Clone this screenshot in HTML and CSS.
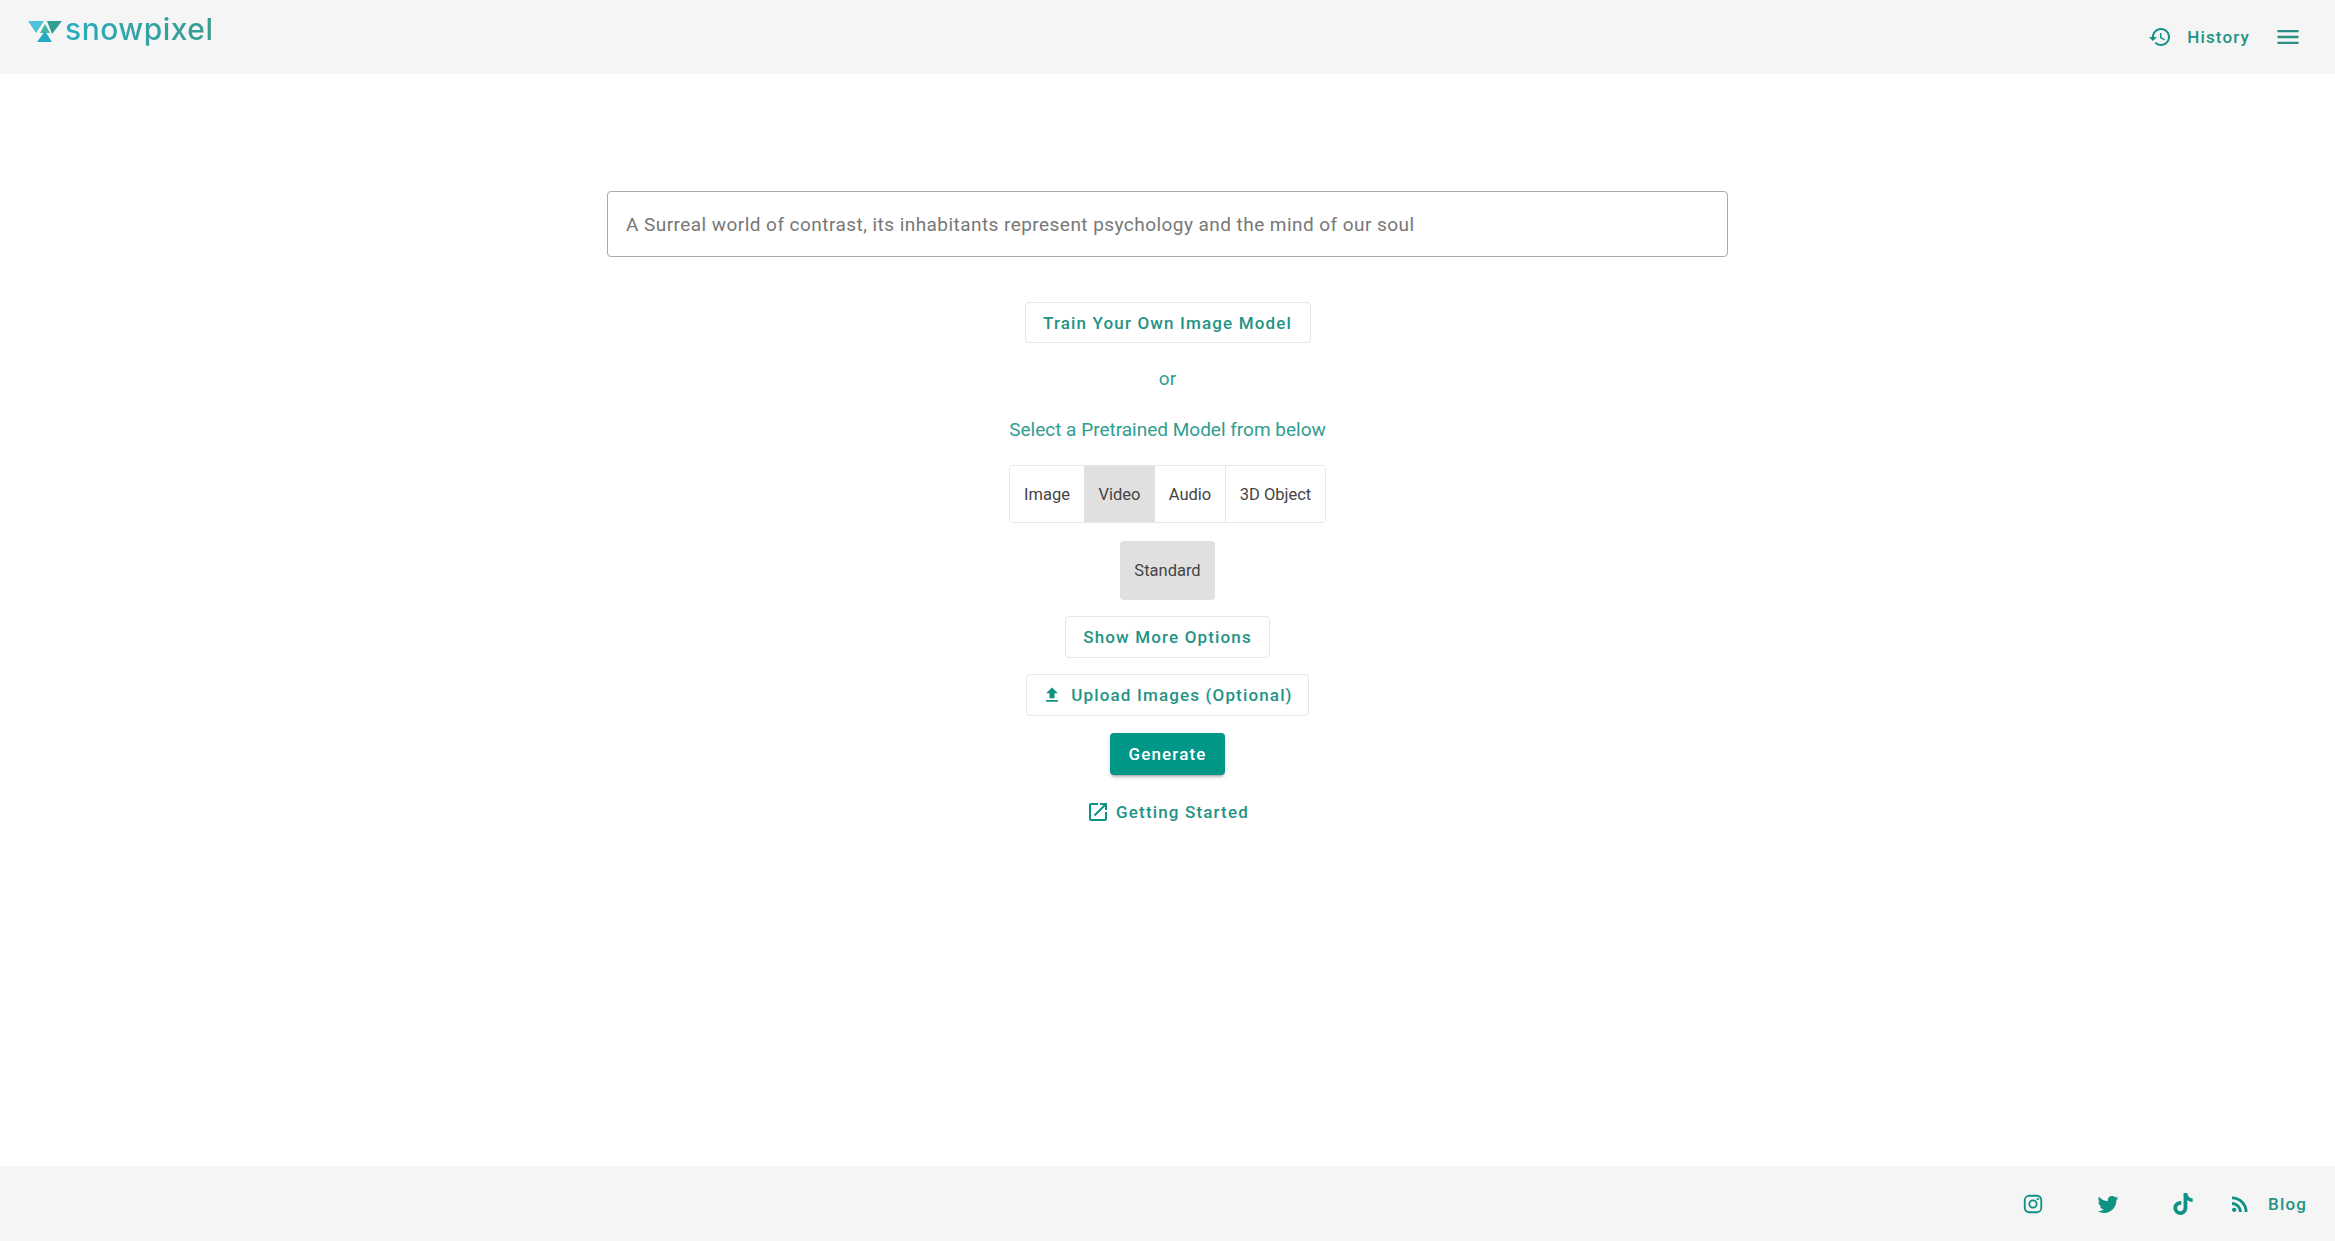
FILE: index.html
```html
<!DOCTYPE html>
<html lang="en">
<head>
    <meta charset="UTF-8">
    <meta name="viewport" content="width=device-width, initial-scale=1.0">
    <title>Snowpixel</title>
    <link rel="stylesheet" href="styles.css">
</head>
<body>
    <header class="topbar">
        <a class="logo" href="#">
            <svg class="logo-mark" viewBox="0 0 36 24">
                <polygon points="1,1 17,1 9,13" fill="#4fc4d6"/>
                <polygon points="20,1 35,1 25,14" fill="#2f9d8f"/>
                <polygon points="18,4 23,13 13,13" fill="#45b5a5"/>
                <polygon points="18,11 25,22 10,22" fill="#22acc4"/>
            </svg>
            <span class="logo-text">snowpixel</span>
        </a>
        <nav class="topnav">
            <a class="text-link history" href="#">
                <svg class="icon" viewBox="0 0 24 24"><path d="M13 3c-4.97 0-9 4.03-9 9H1l3.89 3.89.07.14L9 12H6c0-3.87 3.13-7 7-7s7 3.13 7 7-3.13 7-7 7c-1.93 0-3.68-.79-4.94-2.06l-1.42 1.42C8.27 19.99 10.51 21 13 21c4.97 0 9-4.03 9-9s-4.03-9-9-9zm-1 5v5l4.28 2.54.72-1.21-3.5-2.08V8H12z"/></svg>
                History
            </a>
            <button class="menu-btn"><svg class="icon menu-icon" viewBox="0 0 24 24"><path d="M3 18h18v-2H3v2zm0-5h18v-2H3v2zm0-7v2h18V6H3z"/></svg></button>
        </nav>
    </header>

    <main class="main">
        <input class="prompt" type="text" placeholder="A Surreal world of contrast, its inhabitants represent psychology and the mind of our soul">
        <button class="btn train">Train Your Own Image Model</button>
        <p class="hint or">or</p>
        <p class="hint select">Select a Pretrained Model from below</p>
        <div class="toggle-group">
            <button class="toggle t-image">Image</button>
            <button class="toggle t-video selected">Video</button>
            <button class="toggle t-audio">Audio</button>
            <button class="toggle t-object">3D Object</button>
        </div>
        <button class="toggle standard selected">Standard</button>
        <button class="btn more">Show More Options</button>
        <button class="btn upload">
            <svg class="icon upload-icon" viewBox="0 0 24 24"><path d="M9 16h6v-6h4l-7-7-7 7h4zm-4 2h14v2H5z"/></svg>
            Upload Images (Optional)
        </button>
        <button class="btn generate">Generate</button>
        <a class="text-link started" href="#">
            <svg class="icon" viewBox="0 0 24 24"><path d="M19 19H5V5h7V3H5c-1.11 0-2 .9-2 2v14c0 1.1.89 2 2 2h14c1.1 0 2-.9 2-2v-7h-2v7zM14 3v2h3.59l-9.83 9.83 1.41 1.41L19 6.41V10h2V3h-7z"/></svg>
            Getting Started
        </a>
    </main>

    <footer class="footer">
        <a class="social" href="#"><svg class="icon insta" viewBox="0 0 24 24"><path d="M7.8 2h8.4C19.4 2 22 4.6 22 7.8v8.4a5.8 5.8 0 0 1-5.8 5.8H7.8C4.6 22 2 19.4 2 16.2V7.8A5.8 5.8 0 0 1 7.8 2m-.2 2A3.6 3.6 0 0 0 4 7.6v8.8C4 18.39 5.61 20 7.6 20h8.8a3.6 3.6 0 0 0 3.6-3.6V7.6C20 5.61 18.39 4 16.4 4H7.6m9.65 1.5a1.25 1.25 0 0 1 1.25 1.25A1.25 1.25 0 0 1 17.25 8 1.25 1.25 0 0 1 16 6.75a1.25 1.25 0 0 1 1.25-1.25M12 7a5 5 0 0 1 5 5 5 5 0 0 1-5 5 5 5 0 0 1-5-5 5 5 0 0 1 5-5m0 2a3 3 0 0 0-3 3 3 3 0 0 0 3 3 3 3 0 0 0 3-3 3 3 0 0 0-3-3z"/></svg></a>
        <a class="social" href="#"><svg class="icon" viewBox="0 0 24 24"><path d="M22.46 6c-.77.35-1.6.58-2.46.69.88-.53 1.56-1.37 1.88-2.38-.83.5-1.75.85-2.72 1.05C18.37 4.5 17.26 4 16 4c-2.35 0-4.27 1.92-4.27 4.29 0 .34.04.67.11.98C8.28 9.09 5.11 7.38 3 4.79c-.37.63-.58 1.37-.58 2.15 0 1.49.75 2.81 1.91 3.56-.71 0-1.37-.2-1.95-.5v.03c0 2.08 1.48 3.82 3.44 4.21a4.22 4.22 0 0 1-1.93.07 4.28 4.28 0 0 0 4 2.98 8.521 8.521 0 0 1-5.33 1.84c-.34 0-.68-.02-1.02-.06C3.44 20.29 5.7 21 8.12 21 16 21 20.33 14.46 20.33 8.79c0-.19 0-.37-.01-.56.84-.6 1.56-1.36 2.14-2.23z"/></svg></a>
        <a class="social" href="#"><svg class="icon tiktok" viewBox="0 0 448 512"><path d="M448 209.91a210.06 210.06 0 0 1-122.77-39.25V349.38A162.55 162.55 0 1 1 185 188.31V278.2a74.62 74.62 0 1 0 52.23 71.18V0l88 0a121.18 121.18 0 0 0 1.86 22.17h0A122.18 122.18 0 0 0 381 102.39a121.43 121.43 0 0 0 67 20.14Z"/></svg></a>
        <a class="text-link blog" href="#">
            <svg class="icon" viewBox="0 0 24 24"><path d="M6.18 15.64a2.18 2.18 0 0 1 2.18 2.18C8.36 19 7.38 20 6.18 20 5 20 4 19 4 17.82a2.18 2.18 0 0 1 2.18-2.18M4 4.44A15.56 15.56 0 0 1 19.56 20h-2.83A12.73 12.73 0 0 0 4 7.27V4.44m0 5.66a9.9 9.9 0 0 1 9.9 9.9h-2.83A7.07 7.07 0 0 0 4 12.93V10.1z"/></svg>
            Blog
        </a>
    </footer>
</body>
</html>
```

FILE: styles.css
```css
* { box-sizing: border-box; }
html, body { height: 100%; }
body { margin: 0; display: flex; flex-direction: column; min-height: 1241px; background: #fff; font-family: Roboto, "Liberation Sans", sans-serif; color: #009688; }
a { color: inherit; text-decoration: none; }
button { font-family: inherit; cursor: pointer; }

.icon { width: 24px; height: 24px; fill: #0f9183; display: block; flex: none; }

.topbar { height: 74px; flex: none; background: #f5f5f5; display: flex; justify-content: space-between; padding: 0 29px 0 27px; }
.logo { display: flex; align-items: flex-start; padding-top: 9px; }
.logo-mark { width: 36px; height: 24px; margin-top: 11px; }
.logo-text { font-family: Inter, sans-serif; font-size: 30px; line-height: 40px; font-weight: 500; letter-spacing: 0.5px; margin-left: 2px; background: linear-gradient(90deg, #29adbd, #3b9b8e); -webkit-background-clip: text; background-clip: text; color: transparent; }
.topnav { display: flex; align-items: center; gap: 20px; }
.text-link { display: flex; align-items: center; font-size: 17px; font-weight: 500; letter-spacing: 1.15px; color: #1f9385; white-space: nowrap; }
.history { gap: 15px; }
.menu-btn { border: none; background: none; padding: 0; width: 36px; height: 36px; display: flex; align-items: center; justify-content: center; }
.menu-icon { width: 28px; height: 28px; fill: #2a8f82; }

.main { flex: 1; display: flex; flex-direction: column; align-items: center; padding-top: 117px; }
.prompt { width: 1121px; height: 66px; border: 1px solid #aaa; border-radius: 4px; padding: 0 18px; font-family: inherit; font-size: 19px; letter-spacing: 0.45px; color: #333; outline: none; }
.prompt::placeholder { color: #777; opacity: 1; }

.btn { height: 42px; padding: 0; background: #fff; border: 1px solid #e6e6e6; border-radius: 4px; color: #1f9385; font-size: 17px; font-weight: 500; letter-spacing: 1.15px; white-space: nowrap; display: flex; align-items: center; justify-content: center; }
.train { margin-top: 45px; height: 41px; width: 286px; }
.hint { margin: 0; font-size: 19px; line-height: 24px; color: #2f9d8f; }
.or { margin-top: 24px; }
.select { margin-top: 27px; }

.toggle-group { margin-top: 23px; display: flex; height: 58px; border: 1px solid #e6e6e6; border-radius: 4px; overflow: hidden; }
.toggle { border: none; background: #fff; height: 100%; padding: 0; font-size: 16.5px; color: #444; }
.toggle.selected { background: #e0e0e0; }
.t-image { width: 74px; }
.t-video { width: 71px; }
.t-audio { width: 71px; border-right: 1px solid #e6e6e6; }
.t-object { width: 99px; }
.standard { margin-top: 18px; width: 95px; height: 59px; border-radius: 4px; }

.more { margin-top: 16px; width: 205px; }
.upload { margin-top: 16px; width: 283px; gap: 9px; }
.upload-icon { width: 20px; height: 20px; }
.generate { margin-top: 17px; width: 115px; background: #009688; border: none; color: #fff; box-shadow: 0 3px 3px -2px rgba(0, 0, 0, .3), 0 2px 4px rgba(0, 0, 0, .15); }
.started { margin-top: 25px; height: 24px; gap: 6px; }

.footer { height: 75px; flex: none; background: #f5f5f5; display: flex; align-items: center; justify-content: flex-end; padding: 0 28px 0 0; }
.social { width: 75px; display: flex; justify-content: center; }
.insta { width: 22px; height: 22px; }
.tiktok { width: 20px; height: 22px; }
.blog { gap: 16px; margin-left: 8px; }
```
